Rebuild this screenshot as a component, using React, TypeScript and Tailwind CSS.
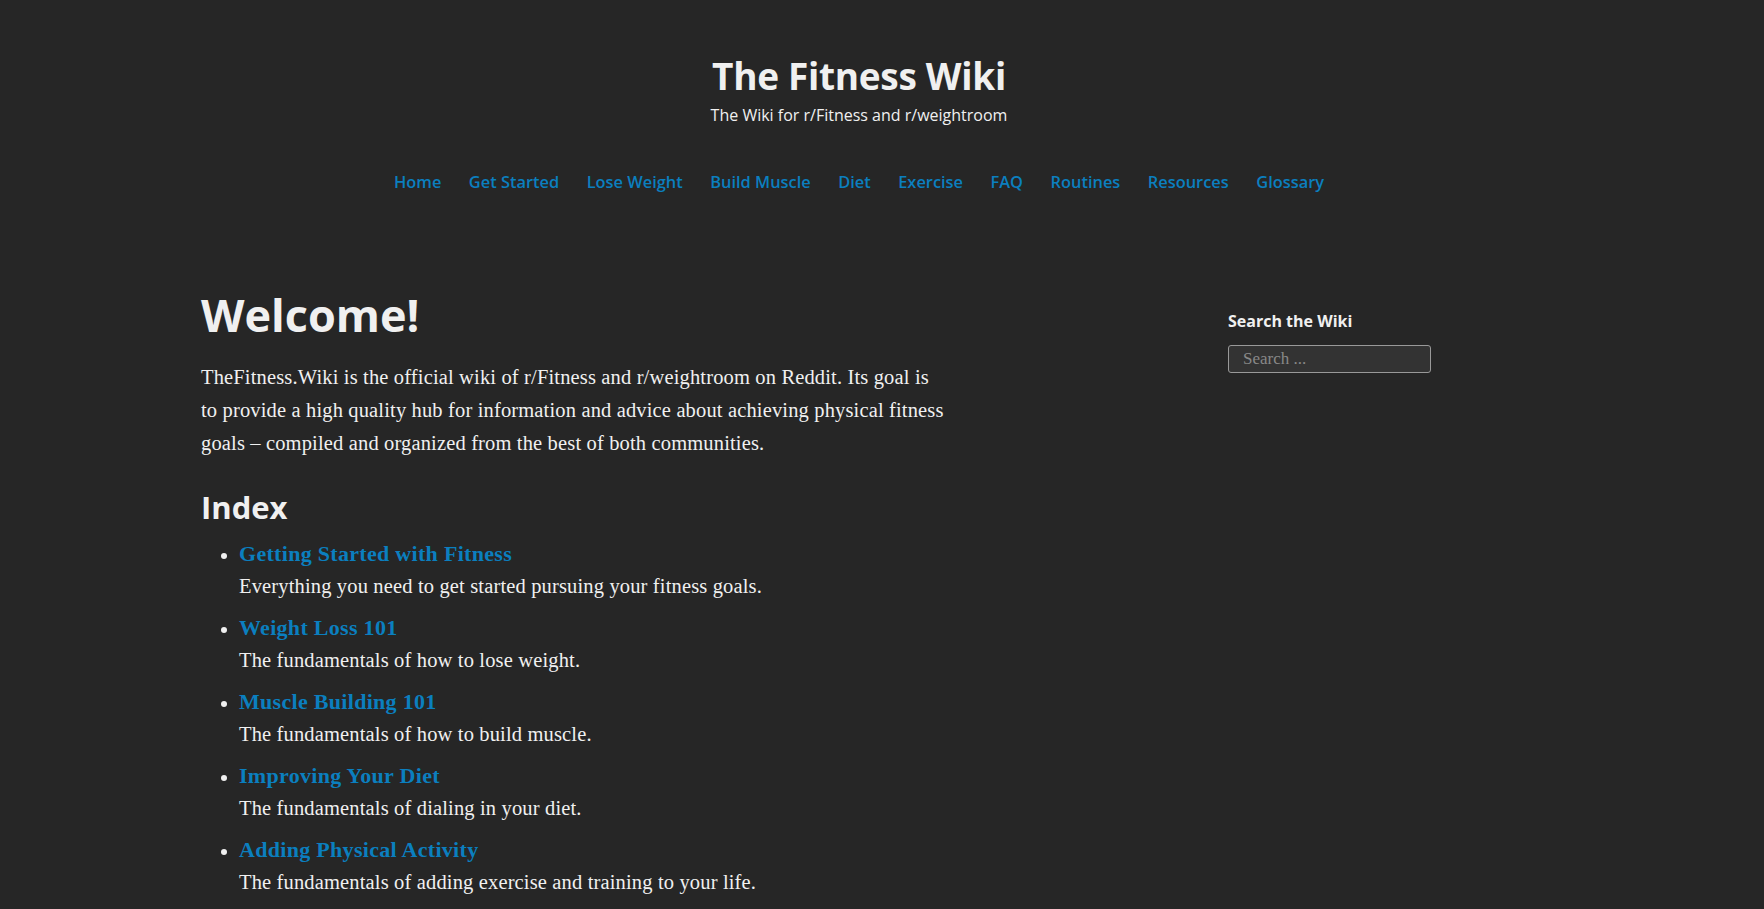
const navItems = [
  "Home",
  "Get Started",
  "Lose Weight",
  "Build Muscle",
  "Diet",
  "Exercise",
  "FAQ",
  "Routines",
  "Resources",
  "Glossary",
];

const indexItems = [
  {
    title: "Getting Started with Fitness",
    text: "Everything you need to get started pursuing your fitness goals.",
  },
  { title: "Weight Loss 101", text: "The fundamentals of how to lose weight." },
  {
    title: "Muscle Building 101",
    text: "The fundamentals of how to build muscle.",
  },
  {
    title: "Improving Your Diet",
    text: "The fundamentals of dialing in your diet.",
  },
  {
    title: "Adding Physical Activity",
    text: "The fundamentals of adding exercise and training to your life.",
  },
];

const sans = "font-['Open_Sans',sans-serif]";
const serif = "font-['Liberation_Serif',serif]";

export default function App() {
  return (
    <div className="min-h-screen bg-[#262626] text-[#f0f0f0]">
      <div className="ml-[201px] w-[1316px]">
        <header className="flex flex-col items-center pt-[52px]">
          <h1 className={`${sans} text-[37px] font-bold leading-[48px] tracking-[-0.3px]`}>
            The Fitness Wiki
          </h1>
          <p className={`${sans} text-[16px] leading-[22px] mt-[4px]`}>
            The Wiki for r/Fitness and r/weightroom
          </p>
          <nav className="mt-[44px]">
            <ul className={`${sans} flex gap-[27.5px] text-[16.4px] font-semibold text-[#0b7fbf]`}>
              {navItems.map((item) => (
                <li key={item}>
                  <a href="#">{item}</a>
                </li>
              ))}
            </ul>
          </nav>
        </header>

        <div className="flex mt-[92px]">
          <main className="w-[750px]">
            <h1 className={`${sans} text-[45px] font-bold leading-[56px]`}>Welcome!</h1>
            <p className={`${serif} text-[20.5px] tracking-[0.15px] leading-[33px] mt-[18px]`}>
              TheFitness.Wiki is the official wiki of r/Fitness and r/weightroom on Reddit. Its
              goal is
              <br />
              to provide a high quality hub for information and advice about achieving physical
              fitness
              <br />
              goals – compiled and organized from the best of both communities.
            </p>
            <h2 className={`${sans} text-[31px] font-bold leading-[40px] mt-[27px]`}>Index</h2>
            <ul className="list-disc pl-[38px] mt-[10px]">
              {indexItems.map((item) => (
                <li key={item.title} className="mb-[8px]">
                  <a
                    href="#"
                    className={`${serif} text-[22px] tracking-[0.3px] font-bold leading-[33px] text-[#0b7fbf]`}
                  >
                    {item.title}
                  </a>
                  <p className={`${serif} text-[20.5px] tracking-[0.15px] leading-[33px]`}>
                    {item.text}
                  </p>
                </li>
              ))}
            </ul>
          </main>

          <aside className="ml-[277px] w-[289px] pt-[23px]">
            <h3 className={`${sans} text-[16px] font-bold leading-[22px]`}>Search the Wiki</h3>
            <input
              type="search"
              placeholder="Search ..."
              className={`${serif} mt-[13px] w-[203px] h-[28px] rounded-[3px] border border-[#999] bg-[#333] px-[14px] text-[17px] text-[#ddd] placeholder:text-[#888] outline-none`}
            />
          </aside>
        </div>
      </div>
    </div>
  );
}
